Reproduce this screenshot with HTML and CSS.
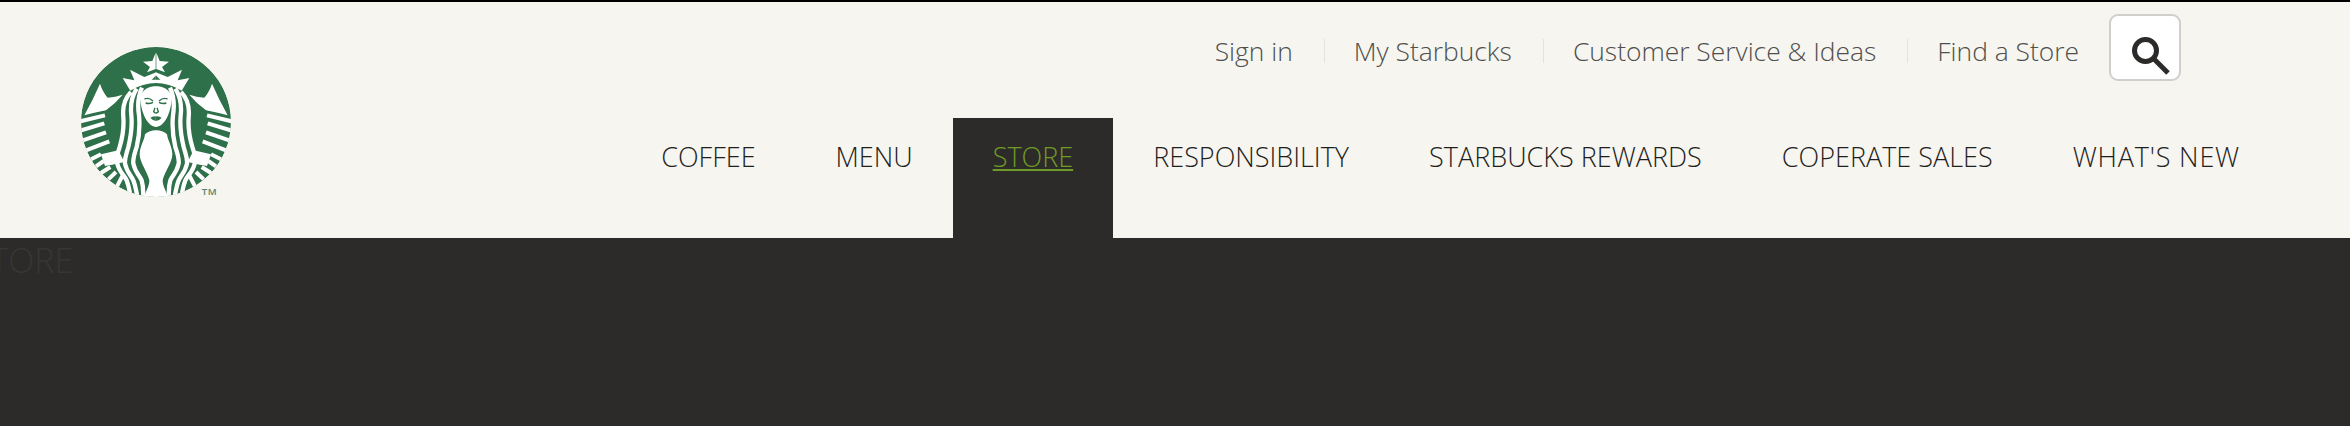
FILE: index.html
```html
<!DOCTYPE html>
<html lang="en">
  <head>
    <meta charset="UTF-8" />
    <title>Store</title>
    <link rel="stylesheet" href="styles.css">
  </head>
  <body>
    <header class="header">
      <a class="logo" href="#">
        <svg class="logo-mark" viewBox="0 0 450 450" aria-label="Starbucks">
          <defs>
            <clipPath id="badge"><circle cx="225" cy="225" r="225" /></clipPath>
            <g id="half">
              <path d="M57 110 Q65 135 80 152 Q103 150 125 143 Q103 170 75 190 Q40 197 10 205 Q35 160 57 110 Z" />
              <path d="M-3 223 L72 205 M-3 251 L70 229 M3 281 L75 256 M13 311 L85 283" class="stripe" />
              <path d="M60 322 L112 310 L130 345 L100 352 L72 357 Z" />
              <path d="M30 337 L60 322 M45 358 L68 342 M60 378 L88 360 M82 397 L105 375 M108 418 L125 385" class="stripe" />
              <path d="M150 135 C125 160 125 190 127 210 C130 250 122 280 116 300 C108 325 105 335 109 350 C115 375 130 385 137 400 C145 420 145 435 150 450" class="hair" />
              <path d="M167 125 C148 155 148 180 151 205 C155 245 148 275 142 300 C135 325 130 335 132 350 C137 375 150 385 157 400 C165 420 165 435 170 450" class="hair" />
              <path d="M183 122 C170 150 170 180 174 205 C178 245 173 275 167 300 C160 320 155 335 157 350 C162 375 175 385 182 400 C188 420 186 435 187 450" class="hair" />
              <path d="M225 250 C210 250 198 255 192 262 C190 280 178 295 176 320 C175 345 200 375 205 400 C205 420 192 435 190 450 L226 450 L226 250 Z" />
              <path d="M226 118 C205 118 185 125 178 150 C178 195 200 240 226 240 Z" />
              <path d="M226 76 L190 90 L147 68 L160 100 L125 93 L148 131 Q185 108 226 108 Z" />
              <path d="M226 17 L236 42 L264 44 L243 60 L252 76 L226 66 Z" />
              <path d="M226 85 L212 98 L226 98 Z" class="mark" />
              <path d="M190 156 Q203 150 216 162 M194 168 Q205 172 216 166" class="feature" />
              <path d="M222 182 L218 194 Q222 198 226 198" class="feature" />
              <path d="M226 208 Q215 208 208 212 Q216 222 226 222 Z" class="mark" />
            </g>
          </defs>
          <g clip-path="url(#badge)">
            <circle cx="225" cy="225" r="225" class="badge" />
            <g class="badge-art">
              <use href="#half" />
              <use href="#half" transform="translate(450 0) scale(-1 1)" />
            </g>
          </g>
          <text x="362" y="443" class="tm">TM</text>
        </svg>
      </a>

      <div class="header-right">
        <div class="util">
          <nav class="util-links">
            <a href="#">Sign in</a>
            <a href="#">My Starbucks</a>
            <a href="#">Customer Service &amp; Ideas</a>
            <a href="#">Find a Store</a>
          </nav>
          <button class="search" type="button" aria-label="Search">
            <svg viewBox="0 0 38 38" class="search-icon">
              <circle cx="13.5" cy="13.5" r="11" />
              <path d="M21.5 21.5 L36 36" />
            </svg>
          </button>
        </div>
        <nav class="gnb">
          <a href="#">COFFEE</a>
          <a href="#">MENU</a>
          <a href="#" class="active">STORE</a>
          <a href="#">RESPONSIBILITY</a>
          <a href="#">STARBUCKS REWARDS</a>
          <a href="#">COPERATE SALES</a>
          <a href="#" class="last">WHAT'S NEW</a>
        </nav>
      </div>
    </header>
    <main class="content">
      <h1 class="page-title">STORE</h1>
    </main>
  </body>
</html>
```

FILE: styles.css
```css
* {
  box-sizing: border-box;
}
html,
body {
  margin: 0;
  height: 100%;
  overflow: hidden;
  background: #2c2b29;
  font-family: "Open Sans", "Liberation Sans", sans-serif;
}
a {
  text-decoration: none;
  color: inherit;
}
.header {
  display: flex;
  justify-content: space-between;
  height: 238px;
  border-top: 2px solid #000;
  background: #f6f5f0;
}
.logo {
  display: block;
  padding: 45px 0 0 81px;
}
.logo-mark {
  display: block;
  width: 150px;
  height: 150px;
}
.badge {
  fill: #2d7049;
}
.badge-art {
  fill: #fff;
}
.stripe {
  fill: none;
  stroke: #fff;
  stroke-width: 12;
}
.hair {
  fill: none;
  stroke: #fff;
  stroke-width: 13;
}
.feature {
  fill: none;
  stroke: #2d7049;
  stroke-width: 4;
}
.mark {
  fill: #2d7049;
}
.tm {
  font-size: 29px;
  font-weight: 600;
  letter-spacing: 2px;
  fill: #5a8470;
}
.header-right {
  display: flex;
  flex-direction: column;
  align-items: flex-end;
  justify-content: space-between;
  padding-right: 70px;
}
.util {
  display: flex;
  align-items: flex-start;
  margin-right: 99px;
  padding-top: 12px;
}
.util-links {
  display: flex;
  align-items: center;
  height: 54px;
  margin-top: 10px;
  margin-right: 30px;
  font-size: 26.4px;
  font-weight: 300;
  color: #4f4f4d;
}
.util-links a {
  display: block;
  padding: 0 31px 0 29px;
  line-height: 24px;
  border-left: 1px solid #e2e2de;
}
.util-links a:first-child {
  border-left: 0;
}
.util-links a:last-child {
  padding-right: 0;
}
.search {
  display: block;
  width: 72px;
  height: 67px;
  padding: 16px 0 0 21px;
  background: #fff;
  border: 2px solid #cfcfcc;
  border-radius: 9px;
}
.search-icon {
  display: block;
  width: 38px;
  height: 38px;
  fill: none;
  stroke: #2c2b29;
  stroke-width: 5;
}
.gnb {
  display: flex;
  height: 120px;
  font-size: 27px;
  font-weight: 300;
  color: #1f1f1d;
}
.gnb a {
  padding: 0 40px;
  line-height: 78px;
}
.gnb .active {
  background: #2c2b29;
  color: #6f9a26;
  text-decoration: underline;
}
.gnb .last {
  letter-spacing: 0.8px;
}
.page-title {
  margin: 0 0 0 -28px;
  font-size: 34px;
  font-weight: 300;
  line-height: 45px;
  color: #363635;
  font-kerning: none;
}
```
